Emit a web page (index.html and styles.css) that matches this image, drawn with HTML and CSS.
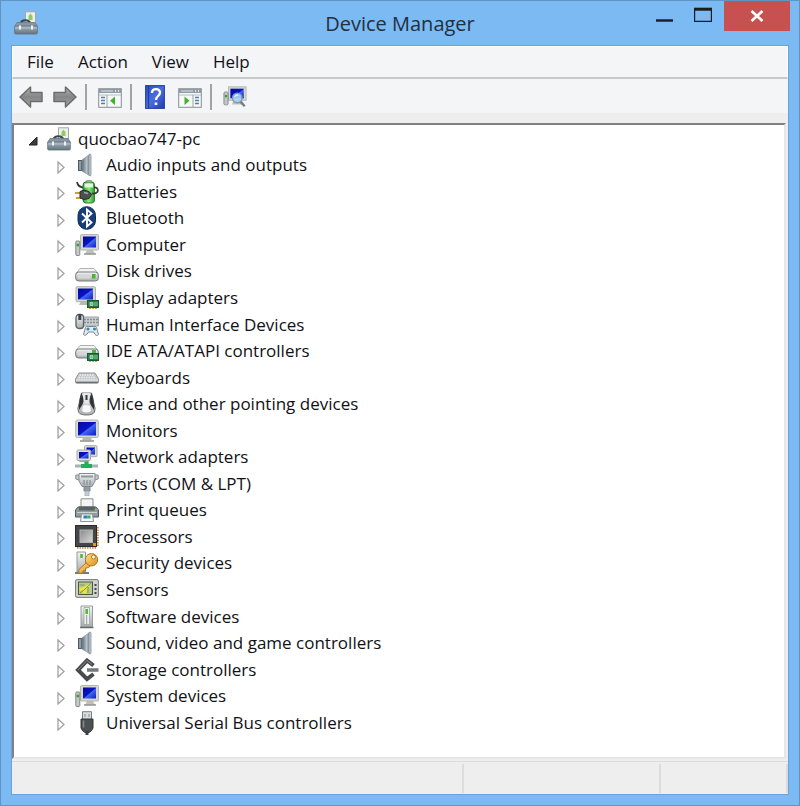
FILE: index.html
```html
<!DOCTYPE html>
<html lang="en">
<head>
<meta charset="utf-8">
<title>Device Manager</title>
<link rel="stylesheet" href="styles.css">
</head>
<body>
<svg class="defs" aria-hidden="true">
  <defs>
    <linearGradient id="metal" x1="0" y1="0" x2="0" y2="1"><stop offset="0" stop-color="#f4f5f5"/><stop offset="1" stop-color="#a9adb0"/></linearGradient>
    <linearGradient id="steel" x1="0" y1="0" x2="0" y2="1"><stop offset="0" stop-color="#a4b2bd"/><stop offset="1" stop-color="#64757f"/></linearGradient>
    <linearGradient id="arrow" x1="0" y1="0" x2="0" y2="1"><stop offset="0" stop-color="#b5b5b5"/><stop offset=".5" stop-color="#858585"/><stop offset="1" stop-color="#a6a6a6"/></linearGradient>
    <linearGradient id="cone" x1="0" y1="0" x2="1" y2="0"><stop offset="0" stop-color="#5c6973"/><stop offset=".6" stop-color="#b6c0c8"/><stop offset="1" stop-color="#77848e"/></linearGradient>
    <linearGradient id="screen" x1="0" y1="0" x2="1" y2="1"><stop offset="0" stop-color="#0608a0"/><stop offset=".5" stop-color="#0a14c4"/><stop offset=".55" stop-color="#4468ee"/><stop offset="1" stop-color="#0c1cc4"/></linearGradient>
    <linearGradient id="green" x1="0" y1="0" x2="1" y2="0"><stop offset="0" stop-color="#2d9a2d"/><stop offset=".5" stop-color="#8be877"/><stop offset="1" stop-color="#2b9c2c"/></linearGradient>
    <linearGradient id="book" x1="0" y1="0" x2="1" y2="1"><stop offset="0" stop-color="#2b4cc4"/><stop offset=".5" stop-color="#4a6ede"/><stop offset="1" stop-color="#1f3cae"/></linearGradient>
    <linearGradient id="chip" x1="0" y1="0" x2="1" y2="1"><stop offset="0" stop-color="#8a8a8a"/><stop offset="1" stop-color="#d8d8d8"/></linearGradient>
    <linearGradient id="gold" x1="0" y1="0" x2="1" y2="1"><stop offset="0" stop-color="#ffe08a"/><stop offset="1" stop-color="#dc8d1b"/></linearGradient>

    <symbol id="toolbox" viewBox="0 0 24 24">
      <rect x="11.500" y=".8" width="10" height="12" fill="#eef0ea" stroke="#a2a8a8"/>
      <path d="M14.500 9V5l2-2.500 2 2.500v4z" fill="#8ccc62"/>
      <path d="M6.500 12.500C7.500 8 15 8 16.500 12.500" fill="none" stroke="#3c464e" stroke-width="2"/>
      <path d="M3 11.500h18l2.500 4H.5z" fill="#8796a2" stroke="#6c7a85" stroke-width=".8"/>
      <rect x=".7" y="15" width="22.600" height="8" rx="1" fill="url(#steel)" stroke="#5f6e79" stroke-width=".8"/>
      <path d="M1 17h22" stroke="#b4c2cc"/>
      <path d="M6 14.500v4M18 14.500v4" stroke="#eff3f5" stroke-width="2"/>
    </symbol>
    <symbol id="speaker" viewBox="0 0 24 24">
      <path d="M3 7h6v11H3z" fill="#4e5a64"/>
      <path d="M4 8h2v9H4z" fill="#8c9ba6"/>
      <path d="M7 7L14.500 1.500v21L7 18z" fill="url(#cone)" stroke="#82909a" stroke-width=".7"/>
      <path d="M14 1.500q2-1.500 2 1v19q0 2.500-2 1z" fill="#c3ccd2" stroke="#8593a0" stroke-width=".8"/>
    </symbol>
    <symbol id="battery" viewBox="0 0 24 24">
      <rect x="11" y="0.500" width="6" height="3" rx="1" fill="#dcebdc" stroke="#5d8a5e" stroke-width=".7"/>
      <rect x="8" y="2" width="11.500" height="21" rx="3" fill="url(#green)" stroke="#337d35"/>
      <path d="M9.500 3.500h8.500v4H9.500z" fill="#e2f8dc"/>
      <path d="M2 2q1 5 6 5.500M17 13.500c8 1 7-7 2-6" fill="none" stroke="#343b36" stroke-width="1.800"/>
      <path d="M0 13h6M1 18h5" stroke="#d3a218" stroke-width="2"/>
      <path d="M5 11.500l4-1.500 5 1.500 2.500 3-2.500 4-5 1-4-1.500z" fill="#4a5050" stroke="#262a28"/>
      <path d="M9 12.500l4 1" stroke="#a4adaa" stroke-width="1.500"/>
    </symbol>
    <symbol id="bluetooth" viewBox="0 0 24 24">
      <rect x="3" y=".7" width="17.500" height="22.600" rx="8.700" fill="#173e79" stroke="#0c2c5c"/>
      <path d="M7 7.500l9.500 9L12 20.500v-17l4.500 4-9.500 9" fill="none" stroke="#fff" stroke-width="1.900"/>
    </symbol>
    <symbol id="computer" viewBox="0 0 24 24">
      <path d="M12 17h6l2 4H10z" fill="#bfc1bd"/><path d="M9 21h12" stroke="#92958f" stroke-width="1.500"/>
      <rect x="5.500" y="1.500" width="18" height="15.500" rx="1" fill="#d6d7d0" stroke="#b4b6b0"/>
      <rect x="8" y="3.500" width="13" height="11" fill="url(#screen)"/>
      <rect x=".8" y="8" width="4" height="14.500" rx="1" fill="#c5c9c7" stroke="#808683"/>
      <path d="M1.500 12h2.500" stroke="#35a52a" stroke-width="2.500"/>
    </symbol>
    <symbol id="disk" viewBox="0 0 24 24">
      <path d="M5 9.500h14l4 5H1z" fill="#f2f3f3" stroke="#b0b3b4"/>
      <rect x=".7" y="13" width="22.600" height="9" rx="3" fill="url(#metal)" stroke="#74787a"/>
      <path d="M3 15.500h12v4H3z" fill="#d4d6d7"/><rect x="17" y="15" width="3.500" height="4.500" fill="#42b62c"/>
    </symbol>
    <symbol id="card" viewBox="0 0 24 24">
      <rect x="12.500" y="14.500" width="11" height="7" fill="#267b48" stroke="#145b30"/>
      <path d="M15 16.500v3h3v-3zM20 16v4M22 16v4" fill="#70c58c" stroke="#b3e0bb" stroke-width=".8"/>
      <path d="M14 22.500h9" stroke="#c9ae46" stroke-dasharray="2 1"/>
    </symbol>
    <symbol id="display" viewBox="0 0 24 24">
      <path d="M6 15h8v4H4z" fill="#b7bab6"/>
      <rect x="1" y=".7" width="19.500" height="15" rx="1" fill="#d6d7d0" stroke="#b0b2ac"/>
      <rect x="3" y="2.500" width="15" height="11" fill="url(#screen)"/>
      <use href="#card"/>
    </symbol>
    <symbol id="hid" viewBox="0 0 24 24">
      <path d="M8 4h15.500v9H8z" fill="#c9cdd0" stroke="#9fa4a8"/>
      <path d="M9 6.500h14M9 9.500h14" stroke="#858b90" stroke-width="1.500" stroke-dasharray="2 1"/>
      <rect x="1" y="1.500" width="7.500" height="14" rx="3" fill="url(#metal)" stroke="#596167" stroke-width="1.300"/>
      <path d="M3.300 1v6h3V1" fill="#3b444b"/>
      <path d="M8.500 21.500l2-7q1-2 3-1h5q2-1 3 1l2 7q-2 3-5-2.500h-5q-3 5-5 2.500z" fill="#e4ebef" stroke="#74838d"/>
      <circle cx="13" cy="16" r="1.600" fill="#3c87b4"/><circle cx="19.500" cy="16" r="1.600" fill="#3c87b4"/>
    </symbol>
    <symbol id="ide" viewBox="0 0 24 24">
      <path d="M5 6.500h14l4 5H1z" fill="#f2f3f3" stroke="#b0b3b4"/>
      <rect x=".7" y="10" width="22.600" height="9" rx="3" fill="url(#metal)" stroke="#74787a"/>
      <path d="M3 12.500h9v4H3z" fill="#d4d6d7"/><path d="M17 11h4v3h-4z" fill="#46b936"/>
      <use href="#card"/>
    </symbol>
    <symbol id="keyboard" viewBox="0 0 24 24">
      <path d="M4 7h16l3.500 6v3q0 1-1.500 1H2q-1.500 0-1.500-1v-3z" fill="#c4c7ca" stroke="#8f9498" stroke-linejoin="round"/>
      <path d="M4.500 9h15M3.500 11.500h17" stroke="#f1f2f3" stroke-width="1.500" stroke-dasharray="1.500 1"/>
      <path d="M1 14h22" stroke="#eceeef"/><path d="M1 16.500h22" stroke="#6c7175" stroke-width="1.500"/>
    </symbol>
    <symbol id="mouse" viewBox="0 0 24 24">
      <path d="M6.500 1h10q1.500 5 2.500 11 2 5 .5 8-1.500 3-8 3t-8-3q-1.500-3 .5-8 1-6 2.500-11z" fill="url(#metal)" stroke="#6c7072"/>
      <path d="M6.500 1Q10 8 7.500 12.500L4 18Q3.500 9 6.500 1M16.500 1q-3.500 7-1 11.500L19 18q.5-9-2.500-17" fill="#303436"/>
      <path d="M8 1h7l-1.500 10q-2 1.500-4 0z" fill="#e4e6e7"/><path d="M11.500 3v5" stroke="#33373a" stroke-width="2"/>
      <path d="M8 14q3.500-2 7 0l1 5q-4.500 3-9 0z" fill="#f8f8f8"/>
    </symbol>
    <symbol id="monitor" viewBox="0 0 24 24">
      <path d="M8 18h8l1 4H7z" fill="#b6b8b3"/><path d="M5 22h14" stroke="#a0a39f" stroke-width="1.800"/>
      <rect x=".7" y="1" width="22.600" height="17.500" rx="1.500" fill="#d9dbd3" stroke="#b3b6af"/>
      <rect x="3" y="3" width="18" height="13.500" fill="url(#screen)"/>
    </symbol>
    <symbol id="network" viewBox="0 0 24 24">
      <rect x="9.500" y=".7" width="12.500" height="11" rx="1" fill="#dadcd7" stroke="#a7aba7"/>
      <rect x="11.500" y="2.500" width="8.500" height="7" fill="url(#screen)"/>
      <path d="M5 15h8l1 2H4z" fill="#a9aca9"/>
      <rect x="2" y="5" width="13.500" height="10.500" rx="1" fill="#dadcd7" stroke="#a7aba7"/>
      <rect x="4" y="7" width="9.500" height="6.500" fill="url(#screen)"/>
      <path d="M0 21h23" stroke="#a7b2b1" stroke-width="3"/><path d="M6 21h11M11.500 16.500v5" stroke="#22ae5c" stroke-width="4.200"/>
    </symbol>
    <symbol id="port" viewBox="0 0 24 24">
      <path d="M.8 3h22.400v4l-3 1H3.800l-3-1z" fill="#c5cacd" stroke="#878f94"/>
      <path d="M4 1.500h16V9l-3 5.500H7L4 9z" fill="url(#metal)" stroke="#848c92"/>
      <path d="M9 14.500h6V19H9z" fill="#929da5" stroke="#7c8890"/><path d="M10 19h4v5h-4z" fill="#c8cdd1" stroke="#9fa7ac" stroke-width=".7"/>
      <path d="M6 4.500h12" stroke="#8d979e" stroke-width="2" /><path d="M9 8v5M12 8v5M15 8v5" stroke="#858f96" stroke-width="1.200"/>
    </symbol>
    <symbol id="printer" viewBox="0 0 24 24">
      <path d="M6 .8h12v10H6z" fill="#f3f4f3" stroke="#8b908f"/>
      <path d="M3 9h18l2.500 3v7H.5v-7z" fill="#929c9e" stroke="#50595b"/>
      <path d="M4 8.500h16v4H4z" fill="#596164"/><path d="M2 14.500h20" stroke="#cbd3d4"/>
      <path d="M6.500 16h11l1 7.500h-13z" fill="#f4f8f8" stroke="#8c9596"/>
      <path d="M8.500 17.500h4v3h-4z" fill="#2380c3"/><path d="M12.500 17.500h3v3h-3z" fill="#42a863"/>
      <path d="M19.500 12h2" stroke="#68cf42" stroke-width="1.500"/>
    </symbol>
    <symbol id="processor" viewBox="0 0 24 24">
      <path d="M2 22.700h20M22.700 2v20" stroke="#ca9141" stroke-width="2" stroke-dasharray="1.500 1"/>
      <rect x=".5" y=".5" width="21" height="21" fill="#454647" stroke="#2a2b2c"/>
      <rect x="5" y="5" width="12.500" height="12.500" fill="url(#chip)" stroke="#b4b4b4"/>
      <path d="M18 18h3v3h-3z" fill="#e3962f"/>
    </symbol>
    <symbol id="security" viewBox="0 0 24 24">
      <path d="M2 1h8.500v20H2z" fill="url(#metal)" stroke="#92999a"/><path d="M6.500 3v4" stroke="#53b53e" stroke-width="2.500"/>
      <path d="M0 22h14" stroke="#767c7e" stroke-width="2"/>
      <path d="M12 11l-8 7.500-.5 3.500 4 .3.500-2.300 2.500-.5.300-2.500 3-.5 2.500-3" fill="url(#gold)" stroke="#b47519"/>
      <path fill-rule="evenodd" d="M12 4.500a6.200 6.200 0 1 1 0 8.500 6.200 6.200 0 0 1 0-8.500zM18.500 4a2 2 0 1 0 0 4 2 2 0 0 0 0-4z" fill="url(#gold)" stroke="#b47519"/>
    </symbol>
    <symbol id="sensor" viewBox="0 0 24 24">
      <rect x=".6" y="1.600" width="22.800" height="17.800" rx="1.500" fill="#d0d3d0" stroke="#757a77"/>
      <rect x="3.500" y="4" width="14" height="12.500" fill="#b4cc92" stroke="#4c573e"/>
      <path d="M4 10.500l5-1.500 7-4-4 6-1 5-4-1 2-3-4 1z" fill="#f4e42c"/><path d="M5 15l4-3 7-7M4.500 7h5M13 15v-6" fill="none" stroke="#6d8848" stroke-width=".8"/>
      <path d="M20.500 6v2M20.500 10v2M20.500 14v2" stroke="#414744" stroke-width="2"/>
    </symbol>
    <symbol id="software" viewBox="0 0 24 24">
      <path d="M6 1h11.500v21H6z" fill="url(#metal)" stroke="#979c9a"/><path d="M9 2.500h5.500v17H9z" fill="#eef1ed" stroke="#969b98" stroke-width=".7"/>
      <path d="M11.700 4v5" stroke="#49ba2f" stroke-width="2.500"/><path d="M11.700 10v9" stroke="#949b97"/><path d="M5 22.500h13.500" stroke="#666c69" stroke-width="1.500"/>
    </symbol>
    <symbol id="storage" viewBox="0 0 24 24">
      <path d="M18.500 7.500L12 2.500 3 12l9 9 6.500-5" fill="none" stroke="#484a4c" stroke-width="4"/>
      <path d="M12 12h11.500" stroke="#74797b" stroke-width="3.500"/><path d="M17 6.500L12 2.500 3 12" fill="none" stroke="#85898b"/>
    </symbol>
    <symbol id="usb" viewBox="0 0 24 24">
      <path d="M7.500.7h9V9h-9z" fill="#d8dddf" stroke="#777d80"/><path d="M10 3v3M14 3v3" stroke="#a0a6aa" stroke-width="1.500"/>
      <path d="M6 8h12v9q-1 3-4 4.500h-4q-3-1.500-4-4.500z" fill="#4b5052" stroke="#313537"/>
      <path d="M8.500 9.500v7" stroke="#858a8d" stroke-width="1.500"/><path d="M12 20v4" stroke="#3c4042" stroke-width="3"/>
    </symbol>
    <symbol id="pane" viewBox="0 0 24 24">
      <rect x=".7" y="3.700" width="22.600" height="18.600" fill="#f7f8f8" stroke="#898e92"/>
      <path d="M1 4h22v4H1z" fill="#8f9ba7"/><path d="M3 6h12" stroke="#dce2e7"/><path d="M17 6h1M20 6h1" stroke="#fff" stroke-width="1.500"/>
      <path d="M1 10h22" stroke="#b7bdc1"/>
    </symbol>
    <symbol id="scan" viewBox="0 0 26 24">
      <path d="M11 15h9l2 5H10z" fill="#bcc0bc"/><rect x="6" y="1" width="19" height="14.500" fill="#d7d8d2" stroke="#b1b5b0"/>
      <rect x="8" y="3" width="14.500" height="10.500" fill="url(#screen)"/>
      <rect x="1" y="6.500" width="4.500" height="14" rx="1.500" fill="#c3c7c5" stroke="#838986"/><path d="M2 11h2.500" stroke="#35a52a" stroke-width="2.500"/>
      <path d="M19 17l4.500 5" stroke="#777c80" stroke-width="2.500"/>
      <circle cx="15.500" cy="13" r="5.200" fill="#abd1ee" fill-opacity=".9" stroke="#7b98b2" stroke-width="1.500"/><path d="M12.500 12q1-3 4-2" stroke="#fff" fill="none"/>
    </symbol>
  </defs>
</svg>

<main class="window">
  <header class="titlebar">
    <svg class="icon app-icon"><use href="#toolbox"/></svg>
    <h1 class="title">Device Manager</h1>
    <div class="window-controls">
      <button class="control" type="button" aria-label="Minimize"><svg width="18" height="16"><path d="M0 13.500h17" stroke="#1c1c1c" stroke-width="2.400"/></svg></button>
      <button class="control" type="button" aria-label="Maximize"><svg width="18" height="16"><path d="M.6 1.500h16.800v12.900H.6z" fill="none" stroke="#1c1c1c" stroke-width="1.200"/><path d="M0 2.200h18" stroke="#1c1c1c" stroke-width="3"/></svg></button>
      <button class="control close" type="button" aria-label="Close"><svg width="14" height="12"><path d="M1.500 1l11 10M12.500 1l-11 10" stroke="#fff" stroke-width="2.600"/></svg></button>
    </div>
  </header>

  <div class="client">
    <nav class="menubar" aria-label="Menu">
      <button class="menu" type="button">File</button>
      <button class="menu" type="button">Action</button>
      <button class="menu" type="button">View</button>
      <button class="menu" type="button">Help</button>
    </nav>

    <div class="toolbar" role="toolbar" aria-label="Tools">
      <button class="tool" type="button" aria-label="Back"><svg class="icon" viewBox="0 0 24 24"><path d="M1 12L11.500 2v5.500h11.500v9H11.500V22z" fill="url(#arrow)" stroke="#6c6c6c" stroke-width="1.500" stroke-linejoin="round"/></svg></button>
      <button class="tool next" type="button" aria-label="Forward"><svg class="icon" viewBox="0 0 24 24"><path d="M23 12L12.500 2v5.500H1v9h11.500V22z" fill="url(#arrow)" stroke="#6c6c6c" stroke-width="1.500" stroke-linejoin="round"/></svg></button>
      <span class="divider"></span>
      <button class="tool" type="button" aria-label="Show or hide console tree"><svg class="icon" viewBox="0 0 24 24"><use href="#pane"/><path d="M9 10v12" stroke="#9ca3a8"/><path d="M3 12.500h4M3 15.500h4M3 18.500h4" stroke="#4a7fb8" stroke-width="1.500"/><path d="M17 11.500v8.500l-5-4.200z" fill="#3ab52c"/></svg></button>
      <span class="divider"></span>
      <button class="tool" type="button" aria-label="Help"><svg class="icon" viewBox="0 0 24 24"><rect x="2.600" y=".6" width="18.800" height="22.800" fill="url(#book)" stroke="#243f9d"/><path d="M5.500 1v22" stroke="#203b9f"/><path d="M9 8c0-5 8-5 8-.5 0 3.500-4 3.500-4 7.500" fill="none" stroke="#fff" stroke-width="2.300"/><path d="M11.700 17.500h2.600V20h-2.600z" fill="#fff"/></svg></button>
      <button class="tool" type="button" aria-label="Show or hide action pane"><svg class="icon" viewBox="0 0 24 24"><use href="#pane"/><path d="M15 10v12" stroke="#9ca3a8"/><path d="M17 12.500h4M17 15.500h4M17 18.500h4" stroke="#4a7fb8" stroke-width="1.500"/><path d="M6.500 11.500v8.500l5-4.200z" fill="#3ab52c"/></svg></button>
      <span class="divider"></span>
      <button class="tool" type="button" aria-label="Scan for hardware changes"><svg class="icon"><use href="#scan"/></svg></button>
    </div>

    <section class="tree" aria-label="Devices">
      <div class="row root">
        <button class="toggle" type="button" aria-label="Collapse"><svg width="10" height="10"><path d="M9 1v8H1z" fill="#3c3c3c" stroke="#222"/></svg></button>
        <svg class="icon"><use href="#toolbox"/></svg>
        <span>quocbao747-pc</span>
      </div>
      <ul class="devices" id="devices"></ul>
    </section>

    <footer class="statusbar">
      <span class="cell wide"></span>
      <span class="cell medium"></span>
      <span class="cell small"></span>
    </footer>
  </div>
</main>
<script src="devices.js"></script>
</body>
</html>
```
FILE: devices.js
```js
const devices = [
  ["speaker", "Audio inputs and outputs"],
  ["battery", "Batteries"],
  ["bluetooth", "Bluetooth"],
  ["computer", "Computer"],
  ["disk", "Disk drives"],
  ["display", "Display adapters"],
  ["hid", "Human Interface Devices"],
  ["ide", "IDE ATA/ATAPI controllers"],
  ["keyboard", "Keyboards"],
  ["mouse", "Mice and other pointing devices"],
  ["monitor", "Monitors"],
  ["network", "Network adapters"],
  ["port", "Ports (COM & LPT)"],
  ["printer", "Print queues"],
  ["processor", "Processors"],
  ["security", "Security devices"],
  ["sensor", "Sensors"],
  ["software", "Software devices"],
  ["speaker", "Sound, video and game controllers"],
  ["storage", "Storage controllers"],
  ["computer", "System devices"],
  ["usb", "Universal Serial Bus controllers"]
];

document.getElementById("devices").innerHTML = devices.map(([icon, name]) => `
  <li class="row">
    <button class="toggle" type="button" aria-label="Expand"><svg width="8" height="14"><path d="M1 2l6 5.500L1 13z" fill="#fff" stroke="#a2a2a2" stroke-width="1.300"/></svg></button>
    <svg class="icon"><use href="#${icon}"/></svg>
    <span>${name.replace("&", "&amp;")}</span>
  </li>`).join("");
```
FILE: styles.css
```css
* {
  box-sizing: border-box;
}

body {
  margin: 0;
  font: 17px/24px "Open Sans", "Noto Sans", sans-serif;
  color: #111116;
}

button {
  padding: 0;
  border: 0;
  background: none;
  font: inherit;
  color: inherit;
}

svg {
  display: block;
}

.defs {
  position: absolute;
  width: 0;
  height: 0;
}

.icon {
  flex: none;
  width: 24px;
  height: 24px;
}

.window {
  display: flex;
  flex-direction: column;
  min-height: 100vh;
  padding: 0 10px;
  border: 1px solid #5f94c5;
  border-bottom-width: 1px;
  padding-bottom: 10px;
  background: #7bbaf3;
}

.titlebar {
  display: grid;
  grid-template-columns: 1fr auto 1fr;
  height: 44px;
}

.app-icon {
  margin: 10px 0 0 3px;
}

.title {
  margin: 9px 0 0;
  font-size: 20px;
  font-weight: 400;
  line-height: 28px;
  color: #22303e;
}

.window-controls {
  display: flex;
  justify-content: flex-end;
  align-items: flex-start;
}

.control {
  display: grid;
  place-items: center;
  width: 38px;
  height: 28px;
}

.close {
  width: 66px;
  height: 30px;
  margin: 0 -1px 0 2px;
  background: #c75050;
}

.client {
  display: flex;
  flex: 1;
  flex-direction: column;
  border: 1px solid #6ba3d7;
  background: #eee;
}

.menubar {
  display: flex;
  gap: 24px;
  height: 33px;
  padding: 0 14px;
  border: 1px solid #fff;
  border-bottom: 2px solid #c6c8cb;
  background: #f4f5f7;
}

.toolbar {
  display: flex;
  align-items: center;
  height: 34px;
  padding: 2px 7px 0;
  background: #f4f5f7;
}

.next {
  margin-left: 10px;
}

.divider {
  width: 2px;
  height: 26px;
  margin: 0 11px 0 8px;
  background: #a2a3a5;
}

.tool + .divider + .tool + .tool {
  margin-left: 11px;
}

.tree {
  flex: 1;
  margin: 10px 2px 2px 0;
  padding: 1px 12px 19px;
  border: 2px solid #e6e6e6;
  border-top-color: #818181;
  border-left-color: #818181;
  background: #fff;
}

.row {
  display: flex;
  align-items: center;
}

.root {
  height: 26px;
}

.devices {
  display: grid;
  grid-auto-rows: 1fr;
  height: 584px;
  margin: 0;
  padding: 0 0 0 28px;
  list-style: none;
}

.toggle {
  display: grid;
  place-items: center;
  width: 14px;
  margin-right: 7px;
  padding-top: 3px;
}

.row .icon {
  margin-right: 7px;
}

.statusbar {
  display: flex;
  height: 33px;
  padding: 2px 0 1px;
  border-top: 1px solid #dcdcdc;
}

.cell {
  border-right: 2px solid #dcdcdc;
}

.wide {
  flex: 452;
}

.medium {
  flex: 196;
}

.small {
  flex: 126;
}
```
